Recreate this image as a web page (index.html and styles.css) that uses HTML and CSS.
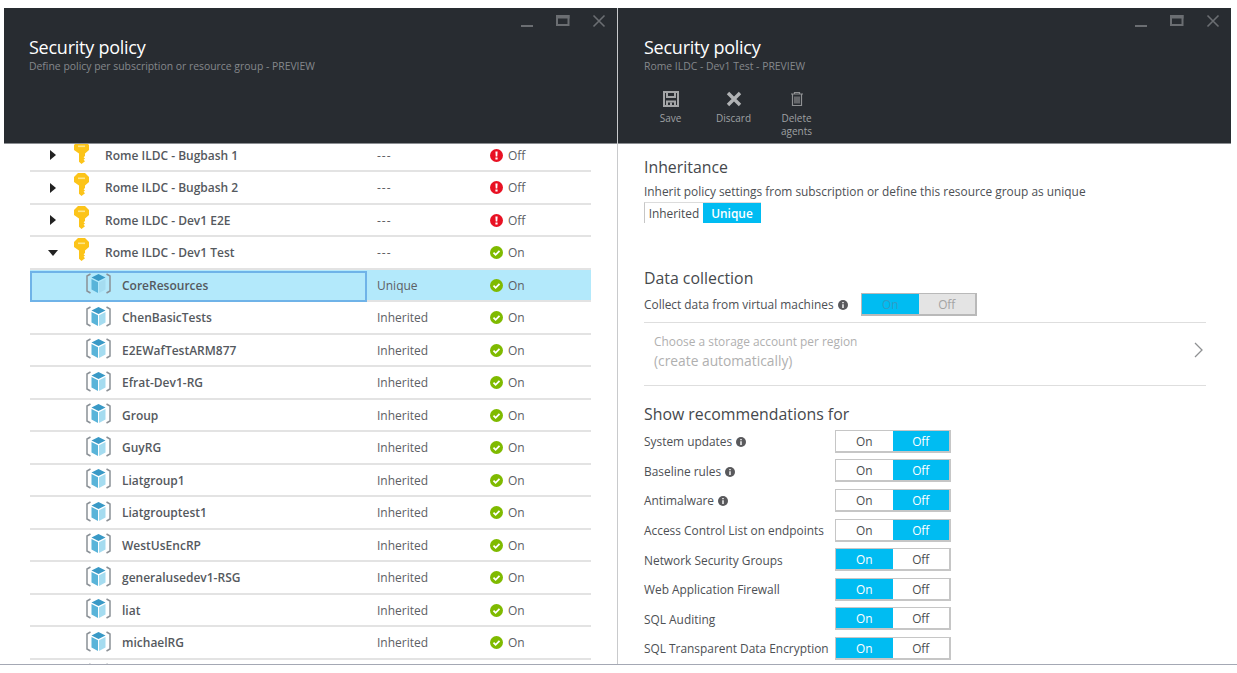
FILE: index.html
```html
<!DOCTYPE html>
<html lang="en">
<head>
  <meta charset="UTF-8" />
  <title>Security policy</title>
  <link rel="stylesheet" href="styles.css">
</head>
<body>

  <!-- shared icons -->
  <svg class="defs" aria-hidden="true">
    <symbol id="key" viewBox="0 0 15 23">
      <path fill="#fcc419" d="M4 0h7l4 4v5l-4 3.400V15l-1.400 1.200 1.400 1.300-1.400 1.300 1.400 1.400L7.500 23 5 20.800V12.400L0 9V4z"/>
      <path fill="#fde68a" d="M4 4.500h7v1.600H4z"/>
    </symbol>
    <symbol id="cube" viewBox="0 0 25 21">
      <path fill="none" stroke="#8b9197" stroke-width="1.500" d="M4.500 1L1 3v15l3.500 2M20.500 1L24 3v15l-3.500 2"/>
      <path fill="#3999c6" d="M12.500 1l7 3.500-7 3.500-7-3.500z"/>
      <path fill="#59b4d9" d="M5.500 6l6.500 3.200V20l-6.500-3.400z"/>
      <path fill="#a5dcf0" d="M19.500 6L13 9.200V20l6.500-3.400z"/>
    </symbol>
    <symbol id="ok" viewBox="0 0 13 13">
      <circle cx="6.500" cy="6.500" r="6.500" fill="#7fba00"/>
      <path fill="none" stroke="#fff" stroke-width="1.800" d="M3.500 6.700l2.100 2.100 3.900-4"/>
    </symbol>
    <symbol id="bad" viewBox="0 0 13 13">
      <circle cx="6.500" cy="6.500" r="6.500" fill="#e81123"/>
      <path fill="#fff" d="M5.400 2.500h2.200l-.3 5H5.700zM5.400 8.500h2.200v2H5.400z"/>
    </symbol>
    <symbol id="info" viewBox="0 0 10 10">
      <circle cx="5" cy="5" r="5" fill="#59595c"/>
      <path fill="#fff" d="M4.300 2h1.400v1.300H4.300zM4.300 4.200h1.400V8H4.300z"/>
    </symbol>
    <symbol id="winbtns" viewBox="0 0 85 14">
      <path fill="#6b6e72" d="M0 11h12v2H0z"/>
      <path fill="none" stroke="#6b6e72" stroke-width="2" d="M36 2h11.500v9H36z"/>
      <path fill="#6b6e72" d="M35 1h13.500v3.500H35z"/>
      <path fill="none" stroke="#6b6e72" stroke-width="1.600" d="M72.500 1.500l11 11M83.500 1.500l-11 11"/>
    </symbol>
  </svg>

  <div class="portal">

    <section class="blade">
      <header class="blade-head">
        <div class="win-row"><svg class="win-btns"><use href="#winbtns"/></svg></div>
        <h1>Security policy</h1>
        <p class="sub">Define policy per subscription or resource group - PREVIEW</p>
      </header>

      <div class="grid-wrap">
        <div class="row first">
          <div class="name"><span class="caret"></span><svg class="key"><use href="#key"/></svg><b>Rome ILDC - Bugbash 1</b></div>
          <div class="type none">---</div>
          <div class="state"><svg class="st"><use href="#bad"/></svg>Off</div>
        </div>
        <div class="row">
          <div class="name"><span class="caret"></span><svg class="key"><use href="#key"/></svg><b>Rome ILDC - Bugbash 2</b></div>
          <div class="type none">---</div>
          <div class="state"><svg class="st"><use href="#bad"/></svg>Off</div>
        </div>
        <div class="row">
          <div class="name"><span class="caret"></span><svg class="key"><use href="#key"/></svg><b>Rome ILDC - Dev1 E2E</b></div>
          <div class="type none">---</div>
          <div class="state"><svg class="st"><use href="#bad"/></svg>Off</div>
        </div>
        <div class="row">
          <div class="name"><span class="caret open"></span><svg class="key"><use href="#key"/></svg><b>Rome ILDC - Dev1 Test</b></div>
          <div class="type none">---</div>
          <div class="state"><svg class="st"><use href="#ok"/></svg>On</div>
        </div>
        <div class="row selected">
          <div class="name child"><svg class="cube"><use href="#cube"/></svg><b>CoreResources</b></div>
          <div class="type">Unique</div>
          <div class="state"><svg class="st"><use href="#ok"/></svg>On</div>
        </div>
        <div class="row">
          <div class="name child"><svg class="cube"><use href="#cube"/></svg><b>ChenBasicTests</b></div>
          <div class="type">Inherited</div>
          <div class="state"><svg class="st"><use href="#ok"/></svg>On</div>
        </div>
        <div class="row">
          <div class="name child"><svg class="cube"><use href="#cube"/></svg><b>E2EWafTestARM877</b></div>
          <div class="type">Inherited</div>
          <div class="state"><svg class="st"><use href="#ok"/></svg>On</div>
        </div>
        <div class="row">
          <div class="name child"><svg class="cube"><use href="#cube"/></svg><b>Efrat-Dev1-RG</b></div>
          <div class="type">Inherited</div>
          <div class="state"><svg class="st"><use href="#ok"/></svg>On</div>
        </div>
        <div class="row">
          <div class="name child"><svg class="cube"><use href="#cube"/></svg><b>Group</b></div>
          <div class="type">Inherited</div>
          <div class="state"><svg class="st"><use href="#ok"/></svg>On</div>
        </div>
        <div class="row">
          <div class="name child"><svg class="cube"><use href="#cube"/></svg><b>GuyRG</b></div>
          <div class="type">Inherited</div>
          <div class="state"><svg class="st"><use href="#ok"/></svg>On</div>
        </div>
        <div class="row">
          <div class="name child"><svg class="cube"><use href="#cube"/></svg><b>Liatgroup1</b></div>
          <div class="type">Inherited</div>
          <div class="state"><svg class="st"><use href="#ok"/></svg>On</div>
        </div>
        <div class="row">
          <div class="name child"><svg class="cube"><use href="#cube"/></svg><b>Liatgrouptest1</b></div>
          <div class="type">Inherited</div>
          <div class="state"><svg class="st"><use href="#ok"/></svg>On</div>
        </div>
        <div class="row">
          <div class="name child"><svg class="cube"><use href="#cube"/></svg><b>WestUsEncRP</b></div>
          <div class="type">Inherited</div>
          <div class="state"><svg class="st"><use href="#ok"/></svg>On</div>
        </div>
        <div class="row">
          <div class="name child"><svg class="cube"><use href="#cube"/></svg><b>generalusedev1-RSG</b></div>
          <div class="type">Inherited</div>
          <div class="state"><svg class="st"><use href="#ok"/></svg>On</div>
        </div>
        <div class="row">
          <div class="name child"><svg class="cube"><use href="#cube"/></svg><b>liat</b></div>
          <div class="type">Inherited</div>
          <div class="state"><svg class="st"><use href="#ok"/></svg>On</div>
        </div>
        <div class="row">
          <div class="name child"><svg class="cube"><use href="#cube"/></svg><b>michaelRG</b></div>
          <div class="type">Inherited</div>
          <div class="state"><svg class="st"><use href="#ok"/></svg>On</div>
        </div>
        <div class="row">
          <div class="name child"><svg class="cube"><use href="#cube"/></svg></div>
        </div>
      </div>
    </section>

    <section class="blade">
      <header class="blade-head">
        <div class="win-row"><svg class="win-btns"><use href="#winbtns"/></svg></div>
        <h1>Security policy</h1>
        <p class="sub">Rome ILDC - Dev1 Test - PREVIEW</p>
        <div class="commands">
          <div class="cmd">
            <svg class="cmd-ico" viewBox="0 0 18 18"><path fill="none" stroke="#a3a5a7" stroke-width="2" d="M2 2h14v14H2zM5 2v5h8V2M5 16v-4.500h8V16"/><path fill="#a3a5a7" d="M8 12.500h2V15H8z"/></svg>
            <span>Save</span>
          </div>
          <div class="cmd">
            <svg class="cmd-ico" viewBox="0 0 18 18"><path fill="none" stroke="#b0b2b4" stroke-width="3.400" d="M3 3l12 12M15 3L3 15"/></svg>
            <span>Discard</span>
          </div>
          <div class="cmd">
            <svg class="cmd-ico" viewBox="0 0 18 18"><path fill="none" stroke="#8f9193" stroke-width="1.200" d="M3 4h12M6.500 4V2.500h5V4M4.500 4v11.500h9V4M7 6.500v7M9 6.500v7M11 6.500v7"/></svg>
            <span>Delete<br>agents</span>
          </div>
        </div>
      </header>

      <div class="form">
        <h2>Inheritance</h2>
        <p class="hint">Inherit policy settings from subscription or define this resource group as unique</p>
        <div class="toggle inherit">
          <span>Inherited</span><span class="on">Unique</span>
        </div>

        <h2 class="collect">Data collection</h2>
        <div class="opt collect-row">
          <label>Collect data from virtual machines <svg class="info"><use href="#info"/></svg></label>
          <div class="toggle disabled"><span class="on">On</span><span>Off</span></div>
        </div>
        <div class="picker">
          <div>
            <p>Choose a storage account per region</p>
            <p class="big">(create automatically)</p>
          </div>
          <svg class="chev" viewBox="0 0 9 16"><path fill="none" stroke="#8f9193" stroke-width="1.300" d="M1 1l7 7-7 7"/></svg>
        </div>

        <h2 class="recs">Show recommendations for</h2>
        <div class="opt">
          <label>System updates <svg class="info"><use href="#info"/></svg></label>
          <div class="toggle"><span>On</span><span class="on">Off</span></div>
        </div>
        <div class="opt">
          <label>Baseline rules <svg class="info"><use href="#info"/></svg></label>
          <div class="toggle"><span>On</span><span class="on">Off</span></div>
        </div>
        <div class="opt">
          <label>Antimalware <svg class="info"><use href="#info"/></svg></label>
          <div class="toggle"><span>On</span><span class="on">Off</span></div>
        </div>
        <div class="opt">
          <label>Access Control List on endpoints</label>
          <div class="toggle"><span>On</span><span class="on">Off</span></div>
        </div>
        <div class="opt">
          <label>Network Security Groups</label>
          <div class="toggle"><span class="on">On</span><span>Off</span></div>
        </div>
        <div class="opt">
          <label>Web Application Firewall</label>
          <div class="toggle"><span class="on">On</span><span>Off</span></div>
        </div>
        <div class="opt">
          <label>SQL Auditing</label>
          <div class="toggle"><span class="on">On</span><span>Off</span></div>
        </div>
        <div class="opt">
          <label>SQL Transparent Data Encryption</label>
          <div class="toggle"><span class="on">On</span><span>Off</span></div>
        </div>
      </div>
    </section>

  </div>

</body>
</html>
```

FILE: styles.css
```css
html, body {
  margin: 0;
  height: 100%;
  overflow: hidden;
  background: #fff;
}

body {
  font-family: "Open Sans", "Noto Sans", sans-serif;
  font-size: 12px;
  color: #4a4d50;
  box-sizing: border-box;
  padding-top: 8px;
}

p, h1, h2 {
  margin: 0;
  font-weight: 400;
}

.defs {
  display: none;
}

.portal {
  display: flex;
  height: 657px;
  padding-left: 4px;
  box-sizing: border-box;
  border-bottom: 1px solid #a4a8b4;
}

.blade {
  width: 613px;
  display: flex;
  flex-direction: column;
  min-height: 0;
}

.blade + .blade {
  width: 613px;
  border-left: 1px solid #c9cacc;
}

/* dark header */
.blade-head {
  height: 136px;
  flex: none;
  background: #282c31;
  box-sizing: border-box;
  padding: 0 25px;
  border-bottom: 1px solid #8b8e92;
}

.blade + .blade .blade-head {
  padding-left: 26px;
}

.win-row {
  display: flex;
  justify-content: flex-end;
  height: 27px;
  padding-top: 6px;
  box-sizing: border-box;
}

.win-btns {
  width: 85px;
  height: 14px;
  margin-right: -14px;
}

.blade-head h1 {
  color: #fff;
  font-size: 18px;
  line-height: 24px;
  letter-spacing: -0.25px;
}

.sub {
  color: #85888c;
  font-size: 10.4px;
  line-height: 14px;
}

.commands {
  display: flex;
  margin: 17px 0 0 -5px;
}

.cmd {
  width: 63px;
  display: flex;
  flex-direction: column;
  align-items: center;
  color: #9fa1a3;
  font-size: 10px;
  line-height: 13px;
  text-align: center;
}

.cmd-ico {
  width: 18px;
  height: 18px;
  margin-bottom: 4px;
}

/* left grid */
.grid-wrap {
  flex: 1;
  min-height: 0;
  overflow: hidden;
  padding-left: 26px;
  width: 561px;
}

.row {
  display: flex;
  align-items: center;
  height: 32.5px;
  flex: none;
  box-sizing: border-box;
  padding-top: 1px;
  border-bottom: 2px solid #e3e3e3;
}

.row.first {
  margin-top: -4.5px;
}

.row.selected {
  background: #b3e9fb;
}

.name {
  width: 337px;
  height: 100%;
  box-sizing: border-box;
  display: flex;
  align-items: center;
  padding-left: 20px;
}

.name b {
  font-weight: 600;
  font-size: 12px;
  color: #55595e;
}

.name.child {
  padding-left: 56px;
}

.selected .name.child {
  border: 2px solid #6fb3e8;
  margin-bottom: -2px;
  height: calc(100% + 2px);
  padding-left: 54px;
  padding-bottom: 2px;
}

.caret {
  width: 24px;
  height: 10px;
  flex: none;
  box-sizing: border-box;
  position: relative;
}

.caret::before {
  content: "";
  position: absolute;
  left: 0;
  top: 0;
  border-left: 6px solid #222;
  border-top: 5px solid transparent;
  border-bottom: 5px solid transparent;
}

.caret.open::before {
  left: -2px;
  top: 2px;
  border-top: 6px solid #222;
  border-left: 5px solid transparent;
  border-right: 5px solid transparent;
  border-bottom: 0;
}

.key {
  width: 15px;
  height: 23px;
  flex: none;
  margin-right: 16px;
  margin-top: -6px;
}

.cube {
  width: 25px;
  height: 21px;
  flex: none;
  margin-right: 11px;
  margin-top: -3px;
}

.type {
  width: 123px;
  box-sizing: border-box;
  padding-left: 10px;
  color: #5d6064;
}

.type.none {
  letter-spacing: 1px;
}

.state {
  display: flex;
  align-items: center;
  color: #5d6064;
}

.st {
  width: 13px;
  height: 13px;
  margin-right: 5px;
  flex: none;
}

/* right form */
.form {
  flex: 1;
  min-height: 0;
  overflow: hidden;
  padding: 11px 25px 0 26px;
  font-size: 11.9px;
}

.form h2 {
  font-size: 15.85px;
  line-height: 24px;
  color: #45484c;
}

.hint {
  line-height: 16px;
  margin-top: 4px;
  color: #4d5054;
}

.toggle {
  display: flex;
  width: 116px;
  height: 23px;
  flex: none;
  box-sizing: border-box;
  border: 1px solid #c6c6c6;
  border-bottom-width: 2px;
  border-right-width: 2px;
}

.toggle span {
  flex: 1;
  text-align: center;
  line-height: 20px;
  color: #4a4d50;
}

.toggle .on {
  background: #00bcf2;
  color: #fff;
}

.toggle.inherit {
  width: 117px;
  height: 21px;
  margin-top: 3px;
  border: 0;
  border-left: 1px solid #c6c6c6;
  border-top: 1px solid #dcdcdc;
}

.toggle.inherit span {
  line-height: 20px;
}

.toggle.inherit .on {
  flex: none;
  width: 58px;
  font-weight: 600;
}

.collect {
  margin-top: 43px;
}

.opt {
  display: flex;
  align-items: center;
  justify-content: space-between;
  width: 307px;
  height: 29.6px;
}

.opt label {
  white-space: nowrap;
  color: #4d5054;
}

.info {
  width: 10px;
  height: 10px;
  margin-left: 1px;
  vertical-align: -1px;
}

.collect-row {
  width: 333px;
  height: 26px;
  margin-top: 1px;
}

.toggle.disabled {
  border-color: #b9b9b9;
  background: #e4e4e4;
}

.toggle.disabled span {
  color: #a3a3a3;
}

.toggle.disabled .on {
  color: #2f9dc6;
}

.picker {
  display: flex;
  justify-content: space-between;
  align-items: center;
  height: 64px;
  margin-top: 5px;
  padding: 0 3px 6px 10px;
  box-sizing: border-box;
  border-top: 1px solid #dedede;
  border-bottom: 1px solid #dedede;
  color: #b0b0b0;
}

.picker p {
  line-height: 20px;
}

.picker .big {
  font-size: 13.8px;
}

.chev {
  width: 9px;
  height: 16px;
  margin-top: -3px;
}

.recs {
  margin-top: 16px;
  margin-bottom: 0.5px;
}
```
